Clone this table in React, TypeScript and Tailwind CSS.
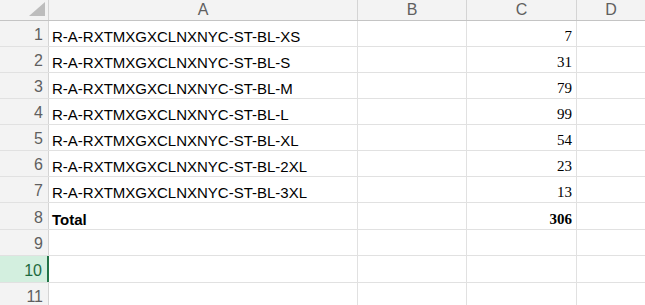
import React from 'react';

const ROWS: { label: string; value: string; bold?: boolean }[] = [
  { label: 'R-A-RXTMXGXCLNXNYC-ST-BL-XS', value: '7' },
  { label: 'R-A-RXTMXGXCLNXNYC-ST-BL-S', value: '31' },
  { label: 'R-A-RXTMXGXCLNXNYC-ST-BL-M', value: '79' },
  { label: 'R-A-RXTMXGXCLNXNYC-ST-BL-L', value: '99' },
  { label: 'R-A-RXTMXGXCLNXNYC-ST-BL-XL', value: '54' },
  { label: 'R-A-RXTMXGXCLNXNYC-ST-BL-2XL', value: '23' },
  { label: 'R-A-RXTMXGXCLNXNYC-ST-BL-3XL', value: '13' },
  { label: 'Total', value: '306', bold: true },
  { label: '', value: '' },
  { label: '', value: '' },
  { label: '', value: '' },
];

const HEIGHTS = [26, 26, 26, 26, 26, 26, 26, 27, 26, 27, 26];
const SELECTED = 10;

export default function App() {
  return (
    <div className="w-[645px] h-[305px] overflow-hidden bg-white font-['Liberation_Sans',Arial,sans-serif]">
      {/* column headers */}
      <div className="flex h-[21px] bg-[#f3f3f3] border-b border-[#c4c4c4] text-[16px] text-[#5f5f5f]">
        <div className="w-[49px] shrink-0 border-r border-[#d4d4d4] flex items-end justify-end pr-[3px] pb-[4px]">
          <svg width="16" height="14" viewBox="0 0 16 14">
            <polygon points="16,0 16,14 0,14" fill="#bdbdbd" />
          </svg>
        </div>
        <div className="w-[309px] shrink-0 border-r border-[#d4d4d4] flex items-center justify-center leading-none">A</div>
        <div className="w-[109px] shrink-0 border-r border-[#d4d4d4] flex items-center justify-center leading-none">B</div>
        <div className="w-[110px] shrink-0 border-r border-[#d4d4d4] flex items-center justify-center leading-none">C</div>
        <div className="flex-1 flex items-center justify-center leading-none">D</div>
      </div>

      {ROWS.map((r, i) => {
        const n = i + 1;
        const sel = n === SELECTED;
        return (
          <div key={n} className="flex border-b border-[#e1e1e1]" style={{ height: HEIGHTS[i] }}>
            <div
              className={`w-[49px] shrink-0 flex items-end justify-end pr-[5px] pb-[2px] text-[16px] leading-none ${
                sel
                  ? 'bg-[#d3efdf] text-[#1d6a40] border-r-2 border-[#217346]'
                  : 'bg-[#f3f3f3] text-[#5f5f5f] border-r border-[#d4d4d4]'
              }`}
            >
              <span className="pb-[1px]">{n}</span>
            </div>
            <div
              className={`w-[309px] shrink-0 border-r border-[#e1e1e1] flex items-end pl-[3px] pb-[2px] text-[15px] leading-none text-black whitespace-nowrap ${
                r.bold ? 'font-bold' : ''
              } ${sel ? 'ml-[-1px] w-[310px]' : ''}`}
            >
              {r.label}
            </div>
            <div className="w-[109px] shrink-0 border-r border-[#e1e1e1]" />
            <div
              className={`w-[110px] shrink-0 border-r border-[#e1e1e1] flex items-end justify-end pr-[4px] pb-[2px] text-[15px] leading-none text-black font-['Liberation_Serif','Times_New_Roman',serif] ${
                r.bold ? 'font-bold' : ''
              }`}
            >
              {r.value}
            </div>
            <div className="flex-1" />
          </div>
        );
      })}
    </div>
  );
}
